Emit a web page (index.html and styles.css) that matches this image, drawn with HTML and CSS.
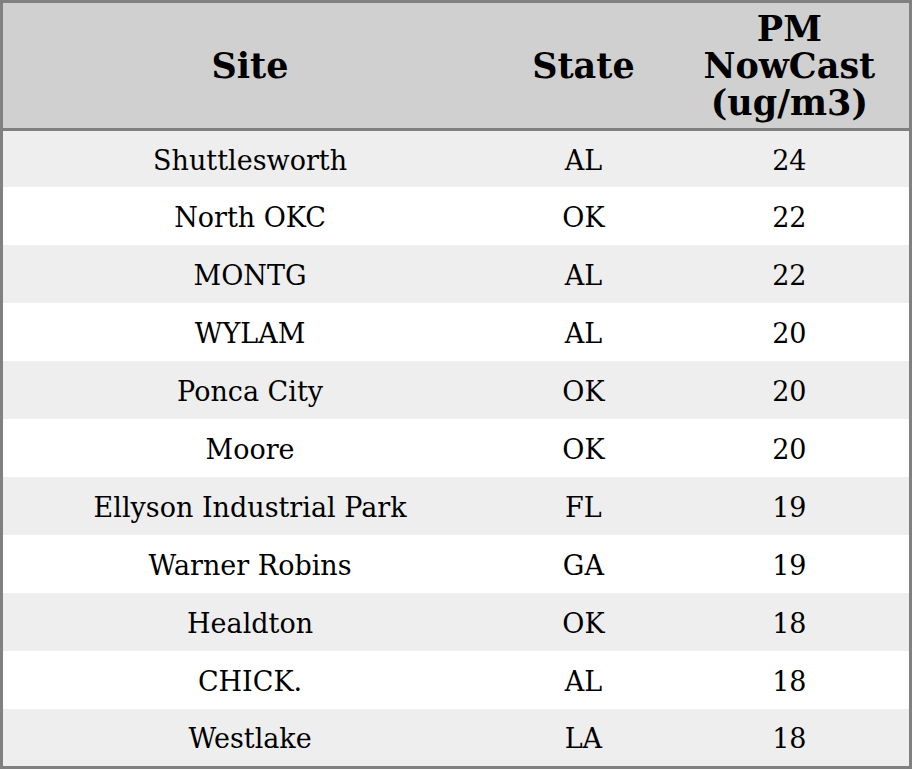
FILE: index.html
```html
<!DOCTYPE html>
<html>
<head>
<meta charset="utf-8">
<link rel="stylesheet" href="styles.css">
</head>
<body>
<table class="grid">
  <colgroup>
    <col class="c-site">
    <col class="c-state">
    <col class="c-pm">
  </colgroup>
  <thead>
    <tr><th>Site</th><th>State</th><th>PM<br>NowCast<br>(ug/m3)</th></tr>
  </thead>
  <tbody>
    <tr><td>Shuttlesworth</td><td>AL</td><td>24</td></tr>
    <tr><td>North OKC</td><td>OK</td><td>22</td></tr>
    <tr><td>MONTG</td><td>AL</td><td>22</td></tr>
    <tr><td>WYLAM</td><td>AL</td><td>20</td></tr>
    <tr><td>Ponca City</td><td>OK</td><td>20</td></tr>
    <tr><td>Moore</td><td>OK</td><td>20</td></tr>
    <tr><td>Ellyson Industrial Park</td><td>FL</td><td>19</td></tr>
    <tr><td>Warner Robins</td><td>GA</td><td>19</td></tr>
    <tr><td>Healdton</td><td>OK</td><td>18</td></tr>
    <tr><td>CHICK.</td><td>AL</td><td>18</td></tr>
    <tr><td>Westlake</td><td>LA</td><td>18</td></tr>
  </tbody>
</table>
</body>
</html>
```
FILE: styles.css
```css
html, body {
  margin: 0;
  padding: 0;
  background: #ffffff;
}
.grid {
  width: 912px;
  border-collapse: collapse;
  border: 3px solid #808080;
  table-layout: fixed;
  font-family: "DejaVu Serif", serif;
  color: #000;
}
.c-site { width: 494px; }
.c-state { width: 172px; }
.c-pm { width: 240px; }
.grid th {
  background: #d0d0d0;
  font-size: 35px;
  font-weight: bold;
  line-height: 37px;
  height: 125px;
  padding: 0;
  text-align: center;
  vertical-align: middle;
  border-bottom: 3px solid #808080;
}
.grid td {
  font-size: 27px;
  height: 56px;
  padding: 2px 0 0 0;
  text-align: center;
  vertical-align: middle;
}
.grid tbody tr:nth-child(odd) td { background: #eeeeee; }
.grid tbody tr:nth-child(even) td { background: #ffffff; }
.grid tbody tr:first-child td { height: 54px; }
.grid tbody tr:last-child td { height: 55px; }
```
